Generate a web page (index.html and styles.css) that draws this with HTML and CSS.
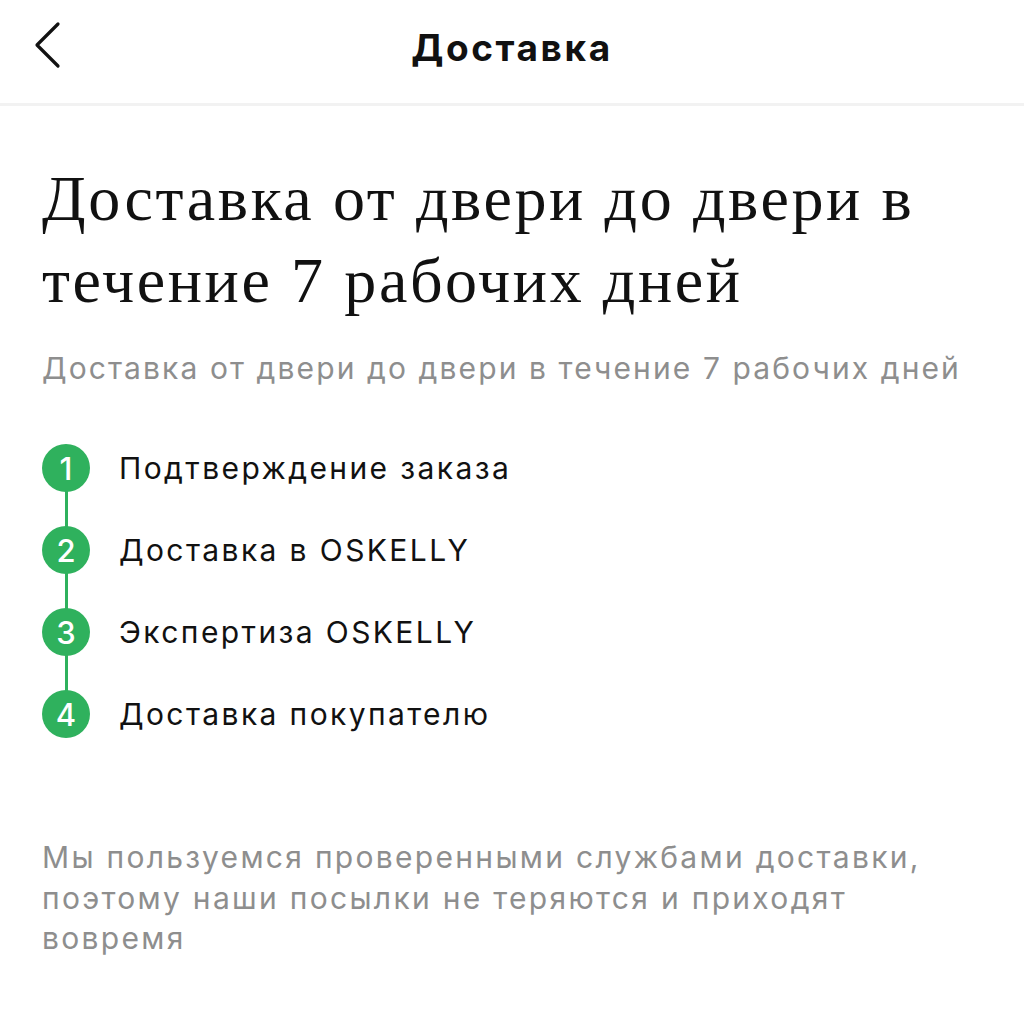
FILE: index.html
```html
<!DOCTYPE html>
<html lang="ru">
<head>
<meta charset="utf-8">
<link rel="stylesheet" href="styles.css">
</head>
<body>
<header class="topbar">
  <button class="back" aria-label="Назад">
    <svg width="30" height="48" viewBox="0 0 30 48"><path d="M26 3 L5 24 L26 45" fill="none" stroke="#111" stroke-width="3.2" stroke-linecap="round" stroke-linejoin="round"/></svg>
  </button>
  <h1 class="title">Доставка</h1>
</header>
<main class="content">
  <h2 class="headline">Доставка от двери до двери в течение 7 рабочих дней</h2>
  <p class="sub">Доставка от двери до двери в течение 7 рабочих дней</p>
  <ol class="steps">
    <li class="step"><span class="num">1</span><span class="label">Подтверждение заказа</span></li>
    <li class="step"><span class="num">2</span><span class="label">Доставка в OSKELLY</span></li>
    <li class="step"><span class="num">3</span><span class="label">Экспертиза OSKELLY</span></li>
    <li class="step"><span class="num">4</span><span class="label">Доставка покупателю</span></li>
  </ol>
  <p class="note">Мы пользуемся проверенными службами доставки, поэтому наши посылки не теряются и приходят вовремя</p>
</main>
</body>
</html>
```
FILE: styles.css
```css
* { box-sizing: border-box; }
body {
  margin: 0;
  background: #fff;
  font-family: Inter, "Liberation Sans", Arial, sans-serif;
  color: #111;
}
.topbar {
  position: relative;
  height: 106px;
  border-bottom: 3px solid #f2f2f2;
  display: flex;
  align-items: center;
  justify-content: center;
}
.back {
  position: absolute;
  left: 32px;
  top: 21px;
  padding: 0;
  border: 0;
  background: none;
  line-height: 0;
}
.title {
  margin: 0;
  margin-top: -8px;
  font-size: 37px;
  font-weight: 700;
  letter-spacing: 2.6px;
}
.content {
  padding: 52px 42px 0;
}
.headline {
  margin: 0;
  font-family: "Liberation Serif", "Times New Roman", serif;
  font-weight: 400;
  font-size: 64px;
  line-height: 82px;
  letter-spacing: 2.6px;
  width: 940px;
}
.sub {
  margin: 26px 0 0;
  font-size: 30px;
  line-height: 40px;
  letter-spacing: 2.1px;
  color: #8e8e8e;
}
.steps {
  list-style: none;
  margin: 56px 0 0;
  padding: 0;
  display: flex;
  flex-direction: column;
  gap: 34px;
}
.step {
  position: relative;
  display: flex;
  align-items: center;
  gap: 29px;
  height: 48px;
}
.step + .step::before {
  content: "";
  position: absolute;
  left: 22.5px;
  top: -37px;
  width: 3px;
  height: 40px;
  background: #2fb15d;
}
.num {
  width: 48px;
  height: 48px;
  border-radius: 50%;
  background: #2fb15d;
  color: #fff;
  font-size: 31px;
  font-weight: 500;
  display: flex;
  align-items: center;
  justify-content: center;
  flex: none;
}
.label {
  font-size: 30px;
  letter-spacing: 2.4px;
  color: #111;
}
.note {
  margin: 99px 0 0;
  font-size: 30px;
  line-height: 40.5px;
  letter-spacing: 2.3px;
  color: #8e8e8e;
  width: 940px;
}
```
